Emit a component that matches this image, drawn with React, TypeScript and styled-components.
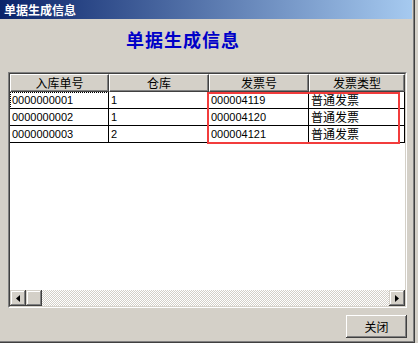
import styled, { createGlobalStyle } from 'styled-components';

const GlobalStyle = createGlobalStyle`
  html, body {
    margin: 0;
    padding: 0;
    background: #d4d0c8;
    overflow: hidden;
  }
`;

const CJK = `"Noto Sans CJK SC", "Liberation Sans", sans-serif`;

const Desk = styled.div`
  width: 418px;
  height: 343px;
  display: flex;
  background: #d4d0c8;
`;

const Window = styled.div`
  width: 415px;
  height: 343px;
  box-sizing: border-box;
  background: #d4d0c8;
  border-right: 1px solid #404040;
  border-bottom: 1px solid #404040;
  box-shadow: inset -1px -1px #808080;
  display: flex;
  flex-direction: column;
`;

const TitleBar = styled.div`
  height: 19px;
  flex: none;
  margin-right: 2px;
  background: linear-gradient(to right, #0a246a, #a6caf0);
  color: #fff;
  font: bold 12px/19px ${CJK};
  padding-left: 4px;
`;

const Body = styled.div`
  flex: 1;
  display: flex;
  flex-direction: column;
  padding: 0 6px 0 8px;
`;

const Heading = styled.div`
  margin: 9px 0 0 118px;
  height: 44px;
  color: #0000c8;
  font: bold 18px/22px ${CJK};
  letter-spacing: 1px;
`;

const Grid = styled.div`
  position: relative;
  width: 399px;
  height: 236px;
  box-sizing: border-box;
  border-style: solid;
  border-width: 1px;
  border-color: #808080 #fff #fff #808080;
  display: flex;
  flex-direction: column;
`;

const GridInner = styled.div`
  flex: 1;
  border-style: solid;
  border-width: 1px;
  border-color: #404040 #d4d0c8 #d4d0c8 #404040;
  background: #fff;
  display: flex;
  flex-direction: column;
  position: relative;
`;

const Row = styled.div`
  display: grid;
  grid-template-columns: 99px 100px 100px 96px;
`;

const HeadCell = styled.div`
  height: 18px;
  box-sizing: border-box;
  background: #d4d0c8;
  border-top: 1px solid #fff;
  border-left: 1px solid #fff;
  border-right: 1px solid #404040;
  border-bottom: 1px solid #404040;
  box-shadow: inset -1px -1px #808080;
  text-align: center;
  font: 12px/16px ${CJK};
  color: #000;
`;

const Cell = styled.div<{ $num?: boolean; $focus?: boolean }>`
  height: 17px;
  box-sizing: border-box;
  border-right: 1px solid #000;
  border-bottom: 1px solid #000;
  padding-left: 2px;
  font: ${(p) => (p.$num ? `11px/16px "Liberation Sans", sans-serif` : `12px/16px ${CJK}`)};
  color: #000;
  white-space: nowrap;
  overflow: hidden;
  outline: ${(p) => (p.$focus ? '1px dotted #000' : 'none')};
  outline-offset: -1px;
`;

const Spacer = styled.div`
  flex: 1;
`;

const ScrollBar = styled.div`
  height: 16px;
  display: flex;
  background: repeating-conic-gradient(#d4d0c8 0 25%, #fff 0 50%) 0 0 / 2px 2px;
`;

const ScrollBtn = styled.div`
  width: 16px;
  height: 16px;
  box-sizing: border-box;
  background: #d4d0c8;
  box-shadow: inset -1px -1px #404040, inset 1px 1px #d4d0c8, inset -2px -2px #808080, inset 2px 2px #fff;
  display: flex;
  align-items: center;
  justify-content: center;
`;

const Highlight = styled.div`
  position: absolute;
  left: 197px;
  top: 18px;
  width: 193px;
  height: 52px;
  box-sizing: border-box;
  border: 2px solid #f23c3c;
  pointer-events: none;
`;

const Footer = styled.div`
  display: flex;
  justify-content: flex-end;
  padding: 7px 1px 0 0;
`;

const Button = styled.button`
  width: 61px;
  height: 23px;
  padding: 0;
  background: #d4d0c8;
  border: none;
  box-shadow: inset -1px -1px #404040, inset 1px 1px #fff, inset -2px -2px #808080, inset 2px 2px #d4d0c8;
  font: 12px/23px ${CJK};
  color: #000;
`;

const rows = [
  { no: '0000000001', store: '1', invoice: '000004119', type: '普通发票' },
  { no: '0000000002', store: '1', invoice: '000004120', type: '普通发票' },
  { no: '0000000003', store: '2', invoice: '000004121', type: '普通发票' },
];

function Arrow({ dir }: { dir: 'left' | 'right' }) {
  return (
    <svg width="4" height="7" viewBox="0 0 4 7">
      {dir === 'left' ? <path d="M4 0 L0 3.5 L4 7 Z" fill="#000" /> : <path d="M0 0 L4 3.5 L0 7 Z" fill="#000" />}
    </svg>
  );
}

export default function App() {
  return (
    <Desk>
      <GlobalStyle />
      <Window>
        <TitleBar>单据生成信息</TitleBar>
        <Body>
          <Heading>单据生成信息</Heading>
          <Grid>
            <GridInner>
              <Row>
                <HeadCell>入库单号</HeadCell>
                <HeadCell>仓库</HeadCell>
                <HeadCell>发票号</HeadCell>
                <HeadCell>发票类型</HeadCell>
              </Row>
              {rows.map((r, i) => (
                <Row key={r.no}>
                  <Cell $num $focus={i === 0}>{r.no}</Cell>
                  <Cell $num>{r.store}</Cell>
                  <Cell $num>{r.invoice}</Cell>
                  <Cell>{r.type}</Cell>
                </Row>
              ))}
              <Spacer />
              <ScrollBar>
                <ScrollBtn>
                  <Arrow dir="left" />
                </ScrollBtn>
                <ScrollBtn />
                <Spacer />
                <ScrollBtn>
                  <Arrow dir="right" />
                </ScrollBtn>
              </ScrollBar>
              <Highlight />
            </GridInner>
          </Grid>
          <Footer>
            <Button>关闭</Button>
          </Footer>
        </Body>
      </Window>
    </Desk>
  );
}
